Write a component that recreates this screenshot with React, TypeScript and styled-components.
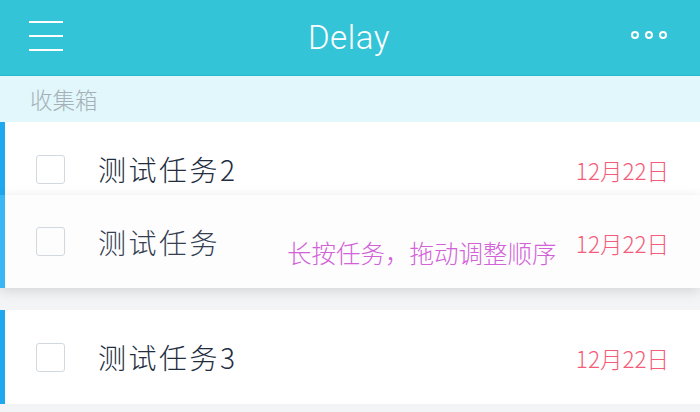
import React from "react";
import styled, { createGlobalStyle } from "styled-components";

const GlobalStyle = createGlobalStyle`
  html, body {
    margin: 0;
    padding: 0;
    background: #f3f4f6;
    font-family: "Noto Sans CJK SC", "Noto Sans", sans-serif;
  }
`;

const Screen = styled.div`
  width: 700px;
  height: 412px;
  overflow: hidden;
  background: #f3f4f6;
`;

const TopBar = styled.header`
  height: 75px;
  background: #33c4d8;
  border-bottom: 1px solid #2bb8cc;
  display: grid;
  grid-template-columns: 1fr auto 1fr;
  align-items: center;
  padding: 0 33px 0 29px;
  color: #ffffff;
`;

const MenuButton = styled.div`
  width: 34px;
  display: flex;
  flex-direction: column;
  gap: 12px;
  margin-top: -4px;

  span {
    display: block;
    height: 2px;
    background: #ffffff;
  }
`;

const Title = styled.h1`
  margin: 0 0 0 2px;
  font-family: Roboto, "Liberation Sans", sans-serif;
  font-weight: 300;
  font-size: 33px;
  letter-spacing: 0.6px;
`;

const MoreButton = styled.div`
  justify-self: end;
  display: flex;
  gap: 6px;
  margin-top: -6px;

  span {
    width: 4px;
    height: 4px;
    border: 2px solid #ffffff;
    border-radius: 50%;
  }
`;

const SectionHeader = styled.div`
  height: 46px;
  background: #e2f7fb;
  display: flex;
  align-items: center;
  padding-left: 30px;
  font-size: 22.5px;
  font-weight: 300;
  color: #a4b0b6;
`;

const List = styled.div`
  display: flex;
  flex-direction: column;
`;

const Slot = styled.div`
  position: relative;
  height: 94px;
  background: #f3f4f6;
`;

const Row = styled.div<{ $lifted?: boolean }>`
  height: ${(p) => (p.$lifted ? "93px" : "94px")};
  display: flex;
  align-items: center;
  background: ${(p) => (p.$lifted ? "#fdfdfe" : "#ffffff")};
  border-left: 5px solid ${(p) => (p.$lifted ? "#39b7f4" : "#1fa8ef")};
  padding: 0 31px 0 31px;
  box-sizing: border-box;
  ${(p) =>
    p.$lifted &&
    `
    position: absolute;
    left: 0;
    right: 0;
    top: -21px;
    z-index: 2;
    box-shadow: 0 3px 12px rgba(0, 0, 0, 0.13);
  `}
`;

const CheckBox = styled.div`
  width: 29px;
  height: 29px;
  box-sizing: border-box;
  border: 1.5px solid #d3d8df;
  border-radius: 3px;
  flex-shrink: 0;
`;

const TaskName = styled.div<{ $muted?: boolean }>`
  margin-left: 33px;
  flex: 1;
  font-size: 28px;
  font-weight: 300;
  letter-spacing: 2.5px;
  color: ${(p) => (p.$muted ? "#354053" : "#222d40")};
`;

const DueDate = styled.div`
  font-size: 22.5px;
  font-weight: 300;
  color: #f45c79;
  margin-top: 2px;
`;

const Hint = styled.div`
  position: absolute;
  left: 282px;
  top: 40px;
  font-size: 24.5px;
  font-weight: 300;
  color: #d262d8;
  white-space: nowrap;
`;

const tasks = [
  { id: 1, name: "测试任务2", date: "12月22日" },
  { id: 2, name: "测试任务", date: "12月22日", dragging: true },
  { id: 3, name: "测试任务3", date: "12月22日" },
];

export default function App() {
  return (
    <Screen>
      <GlobalStyle />
      <TopBar>
        <MenuButton>
          <span />
          <span />
          <span />
        </MenuButton>
        <Title>Delay</Title>
        <MoreButton>
          <span />
          <span />
          <span />
        </MoreButton>
      </TopBar>
      <SectionHeader>收集箱</SectionHeader>
      <List>
        {tasks.map((t) =>
          t.dragging ? (
            <Slot key={t.id}>
              <Row $lifted>
                <CheckBox />
                <TaskName $muted>{t.name}</TaskName>
                <DueDate>{t.date}</DueDate>
                <Hint>长按任务，拖动调整顺序</Hint>
              </Row>
            </Slot>
          ) : (
            <Row key={t.id}>
              <CheckBox />
              <TaskName>{t.name}</TaskName>
              <DueDate>{t.date}</DueDate>
            </Row>
          )
        )}
      </List>
    </Screen>
  );
}
